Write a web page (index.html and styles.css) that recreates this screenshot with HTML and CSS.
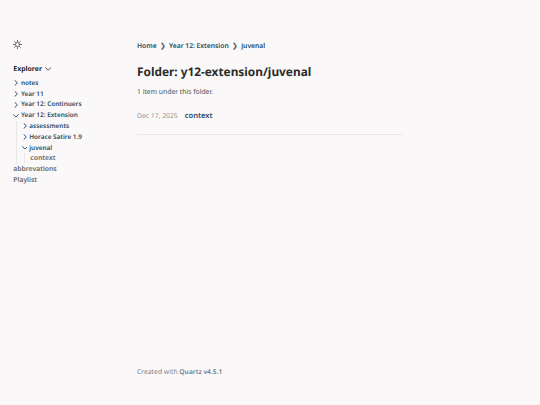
FILE: index.html
```html
<!doctype html>
<html lang="en">
<head>
  <meta charset="UTF-8">
  <title>Folder: y12-extension/juvenal</title>
  <link rel="stylesheet" href="styles.css">
</head>
<body>
  <div class="page">
    <div class="sidebar">
      <button class="darkmode" aria-label="Dark mode">
        <svg viewBox="0 0 20 20">
          <circle cx="10" cy="10" r="4.6"/>
          <path d="M10 .8v3M10 16.2v3M.8 10h3M16.2 10h3M3.5 3.5l2.1 2.1M14.4 14.4l2.1 2.1M3.5 16.5l2.1-2.1M14.4 5.6l2.1-2.1"/>
        </svg>
      </button>
      <div class="explorer">
        <h2>Explorer <svg class="fold" viewBox="0 0 12 12"><path d="M1 3l5 5 5-5"/></svg></h2>
        <ul>
          <li><a class="folder" href="#"><svg viewBox="0 0 12 12"><path d="M4 1l5 5-5 5"/></svg>notes</a></li>
          <li><a class="folder" href="#"><svg viewBox="0 0 12 12"><path d="M4 1l5 5-5 5"/></svg>Year 11</a></li>
          <li><a class="folder" href="#"><svg viewBox="0 0 12 12"><path d="M4 1l5 5-5 5"/></svg>Year 12: Continuers</a></li>
          <li>
            <a class="folder" href="#"><svg viewBox="0 0 12 12"><path d="M1 3.4l5 5 5-5"/></svg>Year 12: Extension</a>
            <ul class="sub">
              <li><a class="folder" href="#"><svg viewBox="0 0 12 12"><path d="M4 1l5 5-5 5"/></svg>assessments</a></li>
              <li><a class="folder" href="#"><svg viewBox="0 0 12 12"><path d="M4 1l5 5-5 5"/></svg>Horace Satire 1.9</a></li>
              <li>
                <a class="folder" href="#"><svg viewBox="0 0 12 12"><path d="M1 3.4l5 5 5-5"/></svg>juvenal</a>
                <ul class="sub">
                  <li><a class="file" href="#">context</a></li>
                </ul>
              </li>
            </ul>
          </li>
          <li><a class="file" href="#">abbrevations</a></li>
          <li><a class="file" href="#">Playlist</a></li>
        </ul>
      </div>
    </div>
    <div class="center">
      <nav class="breadcrumb">
        <a href="#">Home</a><span>❯</span><a href="#">Year 12: Extension</a><span>❯</span><a href="#">juvenal</a>
      </nav>
      <h1>Folder: y12-extension/juvenal</h1>
      <p class="count">1 item under this folder.</p>
      <div class="item">
        <span class="date">Dec 17, 2025</span>
        <a href="#">context</a>
      </div>
      <hr>
      <footer>Created with <a href="#">Quartz v4.5.1</a></footer>
    </div>
  </div>
</body>
</html>
```

FILE: styles.css
```css
*{margin:0;
  padding:0;
  box-sizing:border-box;}
body{background:#faf8f8;
     color:#4e4e4e;
     font-family:"Noto Sans", sans-serif;
     font-size:6.8px;
     line-height:11px;
     text-rendering:geometricPrecision;}
a{color:#284b63;
  font-weight:600;
  text-decoration:none;}
ul{list-style:none;}
svg{display:block;
    fill:none;
    stroke:currentColor;
    stroke-width:1.8;
    stroke-linecap:round;
    stroke-linejoin:round;}
.page{display:grid;
      grid-template-columns:123.7px 266.3px;
      height:405px;
      padding:39px 0 0 13.3px;}
.darkmode{display:block;
          width:9px;
          height:9px;
          margin-top:1px;
          border:0;
          color:#4e4e4e;
          background:none;}
.darkmode svg{width:9px;
              height:9px;}
.explorer{padding-top:15px;}
.explorer h2{display:flex;
             align-items:center;
             gap:3px;
             height:11px;
             margin-bottom:2.8px;
             color:#2b2b2b;
             font-size:6.9px;
             font-weight:700;}
.fold{width:6.4px;
      height:6.4px;
      color:#4e4e4e;}
.explorer li{line-height:10.8px;
             font-size:6.42px;}
.folder{display:flex;
        align-items:center;
        gap:1.8px;}
.folder svg{width:5.8px;
            height:5.8px;
            stroke-width:2;}
.file{display:block;
      color:#4e4e4e;
      font-size:6.8px;
      opacity:.85;}
.sub{margin-left:2.7px;
     padding-left:4.7px;
     border-left:1px solid #e9e8e8;}
.sub .sub{padding-left:5px;}
.center{display:flex;
        flex-direction:column;}
.breadcrumb{display:flex;
            gap:3.4px;
            padding-top:.5px;}
.breadcrumb a{font-size:6.72px;}
h1{margin-top:12.5px;
   color:#2b2b2b;
   font-size:11.85px;
   font-weight:700;
   line-height:18px;}
.count{margin-top:4.6px;}
.item{display:flex;
      gap:7px;
      margin-top:13.4px;}
.item a{font-size:7.5px;
        line-height:13px;}
.date{color:#4e4e4e;
      line-height:12px;
      opacity:.6;}
hr{margin-top:11px;
   border:0;
   border-top:1px solid #e9e8e8;}
footer{margin-top:auto;
       padding-bottom:27.7px;
       opacity:.7;}
footer a{font-size:6.7px;}
```
